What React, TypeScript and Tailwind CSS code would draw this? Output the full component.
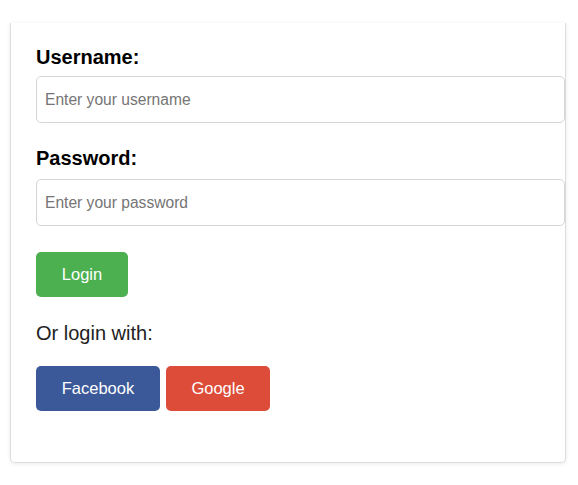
import React from "react";

export default function App() {
  const font = { fontFamily: '"Liberation Sans", Arial, sans-serif' };
  return (
    <div className="min-h-[485px] w-[578px] bg-white pt-[23px] pl-[10px]" style={font}>
      <div className="w-[556px] rounded-b-[5px] border-x border-b border-[#dcdcdc] bg-white pt-[23px] pb-[51px] pl-[25px] shadow-[0_1px_4px_rgba(0,0,0,0.08)]">
        <label className="mb-[7px] block text-[20px] font-bold leading-[23px] text-black">Username:</label>
        <input
          type="text"
          placeholder="Enter your username"
          style={font}
          className="block h-[47px] w-[529px] rounded-[5px] border border-[#d6d6d6] bg-white pl-[8px] text-[15.6px] text-black outline-none placeholder:text-[#757575]"
        />
        <label className="mt-[24px] mb-[9px] block text-[20px] font-bold leading-[23px] text-black">Password:</label>
        <input
          type="password"
          placeholder="Enter your password"
          style={font}
          className="block h-[47px] w-[529px] rounded-[5px] border border-[#d6d6d6] bg-white pl-[8px] text-[15.6px] text-black outline-none placeholder:text-[#757575]"
        />
        <button className="mt-[26px] flex h-[45px] w-[92px] items-center justify-center rounded-[5px] bg-[#4caf50] text-[16.5px] text-white">
          Login
        </button>
        <p className="mt-[25px] text-[20px] leading-[22px] text-[#222]">Or login with:</p>
        <div className="mt-[22px] flex gap-[6px]">
          <button className="flex h-[45px] w-[124px] items-center justify-center rounded-[5px] bg-[#3b5998] text-[16.5px] text-white">
            Facebook
          </button>
          <button className="flex h-[45px] w-[104px] items-center justify-center rounded-[5px] bg-[#dd4b39] text-[16.5px] text-white">
            Google
          </button>
        </div>
      </div>
    </div>
  );
}
